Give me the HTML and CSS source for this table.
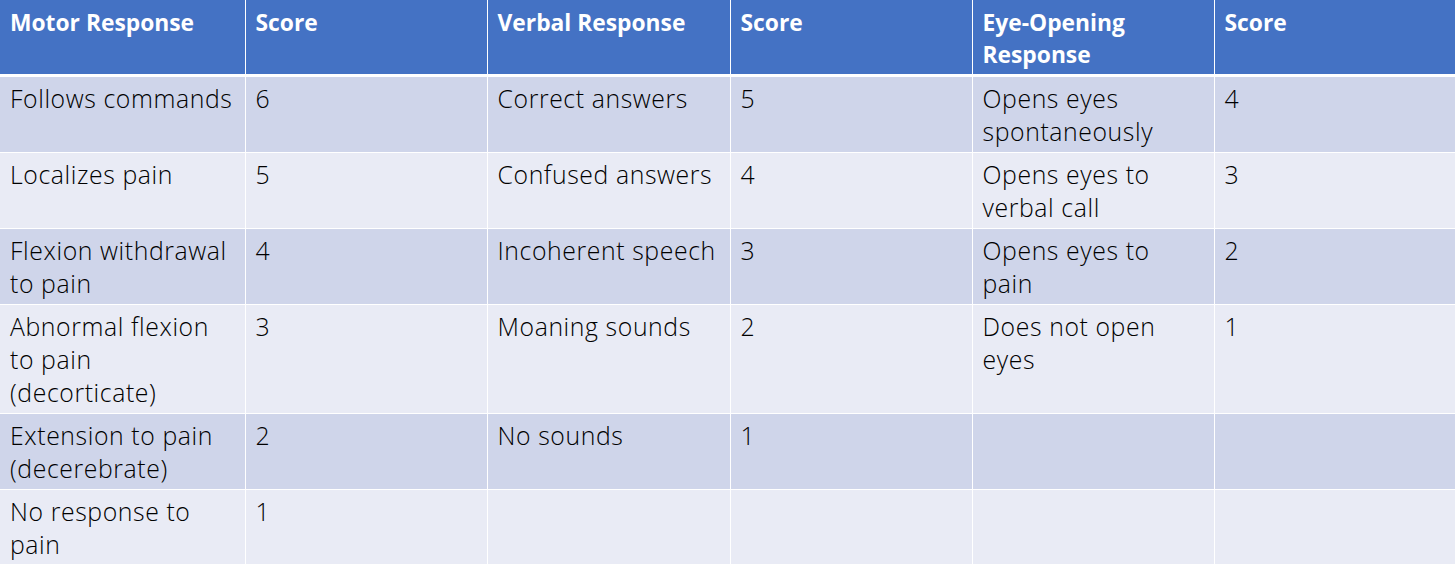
FILE: index.html
```html
<!DOCTYPE html>
<html>
<head>
<meta charset="utf-8">
<link rel="stylesheet" href="styles.css">
</head>
<body>
<table class="gcs">
  <colgroup>
    <col class="c1"><col class="c2"><col class="c3"><col class="c4"><col class="c5"><col class="c6">
  </colgroup>
  <thead>
    <tr>
      <th>Motor Response</th><th>Score</th>
      <th>Verbal Response</th><th>Score</th>
      <th>Eye-Opening<br>Response</th><th>Score</th>
    </tr>
  </thead>
  <tbody>
    <tr class="odd">
      <td>Follows commands</td><td>6</td>
      <td>Correct answers</td><td>5</td>
      <td>Opens eyes<br>spontaneously</td><td>4</td>
    </tr>
    <tr class="even">
      <td>Localizes pain</td><td>5</td>
      <td>Confused answers</td><td>4</td>
      <td>Opens eyes to<br>verbal call</td><td>3</td>
    </tr>
    <tr class="odd">
      <td>Flexion withdrawal<br>to pain</td><td>4</td>
      <td>Incoherent speech</td><td>3</td>
      <td>Opens eyes to<br>pain</td><td>2</td>
    </tr>
    <tr class="even">
      <td>Abnormal flexion<br>to pain<br>(decorticate)</td><td>3</td>
      <td>Moaning sounds</td><td>2</td>
      <td>Does not open<br>eyes</td><td>1</td>
    </tr>
    <tr class="odd">
      <td>Extension to pain<br>(decerebrate)</td><td>2</td>
      <td>No sounds</td><td>1</td>
      <td></td><td></td>
    </tr>
    <tr class="even">
      <td>No response to<br>pain</td><td>1</td>
      <td></td><td></td>
      <td></td><td></td>
    </tr>
  </tbody>
</table>
</body>
</html>
```

FILE: styles.css
```css
html, body {
  margin: 0;
  padding: 0;
  background: #e9ebf5;
  overflow: hidden;
}
.gcs {
  width: 1455px;
  table-layout: fixed;
  border-collapse: collapse;
  font-family: "Open Sans", "Noto Sans", sans-serif;
  font-size: 24.8px;
  font-weight: 300;
  letter-spacing: 0.6px;
  line-height: 33px;
  color: #000;
}
.c1 { width: 245px; }
.c2 { width: 242px; }
.c3 { width: 243px; }
.c4 { width: 242px; }
.c5 { width: 242px; }
.c6 { width: 241px; }
.gcs th, .gcs td {
  text-align: left;
  vertical-align: top;
  padding: 5px 8px 4px 10px;
  border-left: 1px solid #fff;
  border-top: 1px solid #fff;
  white-space: nowrap;
  overflow: hidden;
}
.gcs th:first-child, .gcs td:first-child { border-left: none; }
.gcs th {
  background: #4472c4;
  color: #fff;
  font-weight: 700;
  font-size: 22.8px;
  letter-spacing: 0;
  line-height: 32px;
  height: 65px;
  padding-top: 7px;
  padding-bottom: 2px;
  border-top: none;
  border-bottom: 3px solid #fff;
}
.gcs td { height: 65px; }
.gcs tr.odd td { background: #cfd5ea; }
.gcs tr.even td { background: #e9ebf5; }
```
